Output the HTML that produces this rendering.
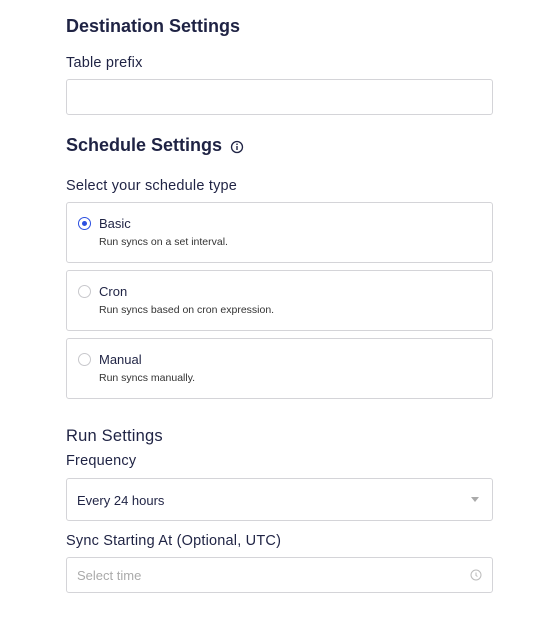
<!DOCTYPE html>
<html><head><style>
body{margin:0;width:559px;height:632px;background:#fff;font-family:"Liberation Sans",sans-serif;color:#1f2344;position:relative}
.a{position:absolute}
h2{margin:0;font-size:18px;font-weight:bold;position:absolute;left:66px;color:#1f2344}
.l{position:absolute;left:66px;font-size:14.5px;color:#1f2344;letter-spacing:.2px}
.box{position:absolute;left:66px;width:425px;border:1px solid #d4d4d8;border-radius:3px;background:#fff}
.opt .t{position:absolute;left:32px;top:13px;font-size:13px}
.opt .s{position:absolute;left:32px;top:33px;font-size:10.5px;color:#333}
.r{position:absolute;left:11px;top:14px;width:13px;height:13px;border:1px solid #c8c8cc;border-radius:50%;box-sizing:border-box}
</style></head><body>
<h2 style="top:16px">Destination Settings</h2>
<div class="l" style="top:55px">Table prefix</div>
<div class="box" style="top:79px;height:34px"></div>
<h2 style="top:135px">Schedule Settings</h2>
<svg class="a" style="left:230px;top:140px" width="14" height="14" viewBox="0 0 14 14"><circle cx="7" cy="7" r="5.5" fill="none" stroke="#1f2344" stroke-width="1.3"/><line x1="7" y1="6" x2="7" y2="10" stroke="#1f2344" stroke-width="1.4"/><circle cx="7" cy="4.2" r=".8" fill="#1f2344"/></svg>
<div class="l" style="top:178px">Select your schedule type</div>
<div class="box opt" style="top:202px;height:59px"><div class="r" style="border:1.5px solid #2b4fe0"><div class="a" style="left:2.5px;top:2.5px;width:5px;height:5px;border-radius:50%;background:#2b4fe0"></div></div><div class="t">Basic</div><div class="s">Run syncs on a set interval.</div></div>
<div class="box opt" style="top:270px;height:59px"><div class="r"></div><div class="t">Cron</div><div class="s">Run syncs based on cron expression.</div></div>
<div class="box opt" style="top:338px;height:59px"><div class="r"></div><div class="t">Manual</div><div class="s">Run syncs manually.</div></div>
<div class="l" style="top:427px;font-size:16.5px">Run Settings</div>
<div class="l" style="top:453px">Frequency</div>
<div class="box" style="top:478px;height:41px"><div class="a" style="left:10px;top:14px;font-size:13px">Every 24 hours</div><div class="a" style="left:404px;top:18px;width:0;height:0;border-left:4px solid transparent;border-right:4px solid transparent;border-top:5px solid #aaa"></div></div>
<div class="l" style="top:533px">Sync Starting At (Optional, UTC)</div>
<div class="box" style="top:557px;height:34px"><div class="a" style="left:10px;top:10px;font-size:13px;color:#aaa">Select time</div><svg class="a" style="left:403px;top:11px" width="12" height="12" viewBox="0 0 12 12"><circle cx="6" cy="6" r="5" fill="none" stroke="#bbb"/><path d="M6 3.5V6.5L7.5 7.5" fill="none" stroke="#bbb"/></svg></div>
</body></html>
